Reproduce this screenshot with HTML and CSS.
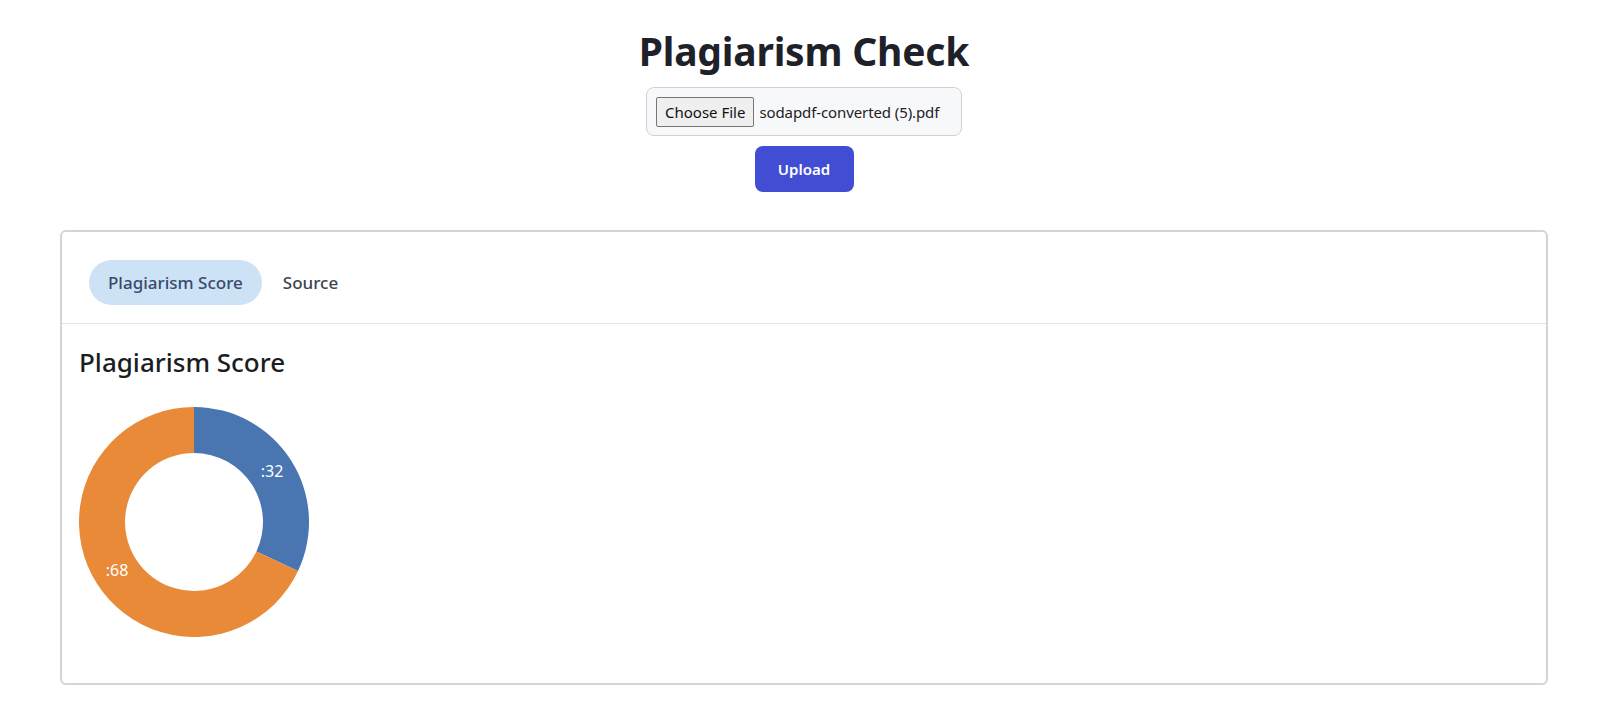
FILE: index.html
```html
<!DOCTYPE html>
<html lang="en">
<head>
<meta charset="utf-8">
<title>Plagiarism Check</title>
<link rel="stylesheet" href="styles.css">
</head>
<body>
<div class="page">
  <header class="top">
    <h1 class="title">Plagiarism Check</h1>
    <div class="file-box">
      <span class="file-btn">Choose File</span>
      <span class="file-name">sodapdf-converted (5).pdf</span>
    </div>
    <button class="upload-btn">Upload</button>
  </header>

  <section class="card">
    <nav class="tabs">
      <span class="tab tab-active">Plagiarism Score</span>
      <span class="tab">Source</span>
    </nav>
    <div class="panel">
      <h2 class="panel-title">Plagiarism Score</h2>
      <svg class="donut" width="230" height="230" viewBox="0 0 230 230">
        <path class="seg-blue" d="M115 0 A115 115 0 0 1 219.05 163.97 L177.43 144.38 A69 69 0 0 0 115 46 Z"/>
        <path class="seg-orange" d="M219.05 163.97 A115 115 0 1 1 115 0 L115 46 A69 69 0 1 0 177.43 144.38 Z"/>
        <text class="seg-label" x="193" y="64" text-anchor="middle" dominant-baseline="central">:32</text>
        <text class="seg-label" x="38" y="163" text-anchor="middle" dominant-baseline="central">:68</text>
      </svg>
    </div>
  </section>
</div>
</body>
</html>
```

FILE: styles.css
```css
* { box-sizing: border-box; }

body {
  margin: 0;
  background: #ffffff;
  font-family: "Noto Sans", "Open Sans", sans-serif;
  color: #1e2129;
}

.page {
  padding: 0 52px 0 60px;
}

.top {
  display: flex;
  flex-direction: column;
  align-items: center;
}

.title {
  margin: 24px 0 0;
  font-size: 39px;
  font-weight: 700;
  line-height: 54px;
  color: #1e2129;
  letter-spacing: -0.2px;
}

.file-box {
  margin-top: 9px;
  width: 316px;
  height: 49px;
  display: flex;
  align-items: center;
  padding: 0 9px;
  gap: 5px;
  border: 1px solid #cfd2d6;
  border-radius: 8px;
  background: #f7f8fa;
  white-space: nowrap;
}

.file-btn {
  display: inline-flex;
  align-items: center;
  height: 30px;
  padding: 0 8px;
  border: 1px solid #767676;
  border-radius: 2px;
  background: #efefef;
  font-size: 15px;
  color: #111;
}

.file-name {
  color: #222;
  font-size: 15px;
  letter-spacing: -0.1px;
}

.upload-btn {
  margin-top: 10px;
  width: 99px;
  height: 46px;
  border: none;
  border-radius: 8px;
  background: #414ed4;
  color: #ffffff;
  font-family: "Noto Sans", sans-serif;
  font-size: 15px;
  font-weight: 600;
}

.card {
  margin-top: 38px;
  height: 455px;
  border: 2px solid #d4d4d4;
  border-radius: 6px;
  background: #fff;
}

.tabs {
  display: flex;
  align-items: center;
  gap: 2px;
  padding: 28px 27px 18px;
  border-bottom: 1px solid #e3e3e3;
}

.tab {
  display: inline-flex;
  align-items: center;
  height: 45px;
  padding: 0 19px;
  border-radius: 23px;
  font-size: 17px;
  font-weight: 500;
  color: #3d4452;
}

.tab-active {
  background: #cde3f5;
  color: #394a6d;
}

.panel {
  padding: 20px 17px 0;
}

.panel-title {
  margin: 0;
  font-size: 26px;
  font-weight: 500;
  line-height: 36px;
  color: #1b1d22;
}

.donut {
  display: block;
  margin-top: 27px;
}

.seg-blue { fill: #4975b1; }
.seg-orange { fill: #e88a37; }

.seg-label {
  fill: #ffffff;
  font-family: "Noto Sans", sans-serif;
  font-size: 16px;
}
```
